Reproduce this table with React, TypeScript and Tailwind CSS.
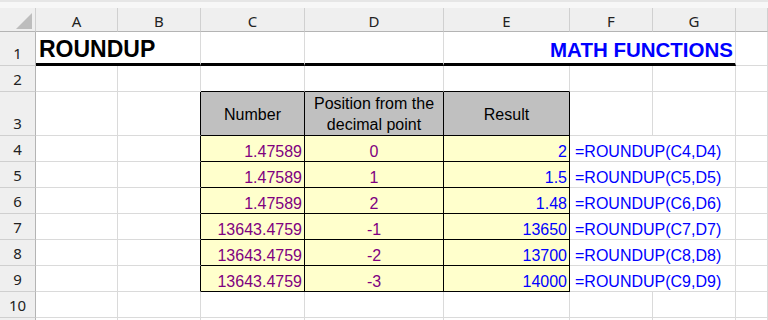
const arial = "font-['Liberation_Sans',Arial,sans-serif]";
const ui = "font-['Noto_Sans','Open_Sans',sans-serif]";

const data = [
  ["1.47589", "0", "2", "=ROUNDUP(C4,D4)"],
  ["1.47589", "1", "1.5", "=ROUNDUP(C5,D5)"],
  ["1.47589", "2", "1.48", "=ROUNDUP(C6,D6)"],
  ["13643.4759", "-1", "13650", "=ROUNDUP(C7,D7)"],
  ["13643.4759", "-2", "13700", "=ROUNDUP(C8,D8)"],
  ["13643.4759", "-3", "14000", "=ROUNDUP(C9,D9)"],
];

const letters = ["A", "B", "C", "D", "E", "F", "G", ""];

// plain grid cell, light gridlines on right and bottom
const cell = "box-border border-r border-b border-r-[#dadada] border-b-[#dadada]";

function RowHead({ n }: { n: number }) {
  return (
    <div
      className={`box-border border-r border-b border-r-[#b4b4b4] border-b-[#cfcfcf] bg-[#efefef] flex items-end justify-center pb-[2px] text-[15px] leading-[20px] text-[#222] ${ui}`}
    >
      {n}
    </div>
  );
}

export default function App() {
  return (
    <div className={`w-[768px] h-[320px] overflow-hidden bg-white ${arial}`}>
      <div className="grid grid-cols-[36px_82px_83px_104px_139px_126px_83px_83px_32px] grid-rows-[8px_24px_34px_26px_44px_26px_26px_26px_26px_26px_26px_26px_26px_2px]">
        {/* strip under the formula bar */}
        <div className="col-span-9 box-border bg-[#f7f7f7] border-t-[2px] border-t-[#e6e6e6]" />

        {/* column letters */}
        <div className="box-border border-r border-b border-r-[#cfcfcf] border-b-[#b4b4b4] bg-[#efefef] relative">
          <svg className="absolute left-0 top-0" width="35" height="23" viewBox="0 0 35 23">
            <polygon points="32,5 32,21 16,21" fill="#bdbdbd" />
          </svg>
        </div>
        {letters.map((l, i) => (
          <div
            key={i}
            className={`box-border border-r border-b border-r-[#d0d0d0] border-b-[#b4b4b4] bg-[#efefef] flex items-center justify-center pt-[3px] text-[15px] text-[#222] ${ui}`}
          >
            {l}
          </div>
        ))}

        {/* row 1: titles */}
        <RowHead n={1} />
        <div className="col-span-2 box-border border-r border-r-[#dadada] border-b-[3px] border-b-black flex items-end pl-[3px] pb-[2px] text-[23px] leading-[24px] font-bold text-black whitespace-nowrap">
          ROUNDUP
        </div>
        <div className="box-border border-r border-r-[#dadada] border-b-[3px] border-b-black" />
        <div className="box-border border-r border-r-[#dadada] border-b-[3px] border-b-black" />
        <div className="col-span-3 box-border border-r border-r-[#dadada] border-b-[3px] border-b-black flex items-end justify-end pr-[2px] pb-[1px] text-[20.5px] leading-[24px] font-bold text-[#0000ff] whitespace-nowrap">
          MATH FUNCTIONS
        </div>
        <div className={cell} />

        {/* row 2 */}
        <RowHead n={2} />
        <div className={cell} />
        <div className={cell} />
        <div className="box-border border-r border-b border-r-[#dadada] border-b-black" />
        <div className="box-border border-r border-b border-r-[#dadada] border-b-black" />
        <div className="box-border border-r border-b border-r-[#dadada] border-b-black" />
        <div className={cell} />
        <div className={cell} />
        <div className={cell} />

        {/* row 3: table head */}
        <RowHead n={3} />
        <div className={cell} />
        <div className="box-border border-r border-b border-r-black border-b-[#dadada]" />
        <div className="box-border border-r border-b border-black bg-[#c0c0c0] flex justify-center pt-[14px] text-[16px] leading-[18px] text-black">
          Number
        </div>
        <div className="box-border border-r border-b border-black bg-[#c0c0c0] flex justify-center text-center pt-[1px] text-[16px] leading-[21px] text-black">
          Position from the
          <br />
          decimal point
        </div>
        <div className="box-border border-r border-b border-black bg-[#c0c0c0] flex justify-center pt-[14px] text-[16px] leading-[18px] text-black">
          Result
        </div>
        <div className={cell} />
        <div className={cell} />
        <div className={cell} />

        {/* rows 4-9 */}
        {data.map((r, i) => (
          <div key={i} className="contents">
            <RowHead n={i + 4} />
            <div className={cell} />
            <div className="box-border border-r border-b border-r-black border-b-[#dadada]" />
            <div className="box-border border-r border-b border-black bg-[#ffffcc] flex items-end justify-end pr-[2px] text-[16px] leading-[18px] text-[#800080]">
              {r[0]}
            </div>
            <div className="box-border border-r border-b border-black bg-[#ffffcc] flex items-end justify-center text-[16px] leading-[18px] text-[#800080]">
              {r[1]}
            </div>
            <div className="box-border border-r border-b border-black bg-[#ffffcc] flex items-end justify-end pr-[2px] text-[16px] leading-[18px] text-[#0000ff]">
              {r[2]}
            </div>
            <div className={`col-span-2 ${cell} flex items-end pl-[5px] text-[16px] leading-[18px] text-[#0000ff] whitespace-nowrap`}>
              {r[3]}
            </div>
            <div className={cell} />
          </div>
        ))}

        {/* row 10 */}
        <RowHead n={10} />
        {letters.map((_, i) => (
          <div key={i} className={cell} />
        ))}

        {/* row 11, cut off */}
        <div className="box-border border-r border-r-[#b4b4b4] bg-[#efefef]" />
        {letters.map((_, i) => (
          <div key={i} className="box-border border-r border-r-[#dadada]" />
        ))}
      </div>
    </div>
  );
}
